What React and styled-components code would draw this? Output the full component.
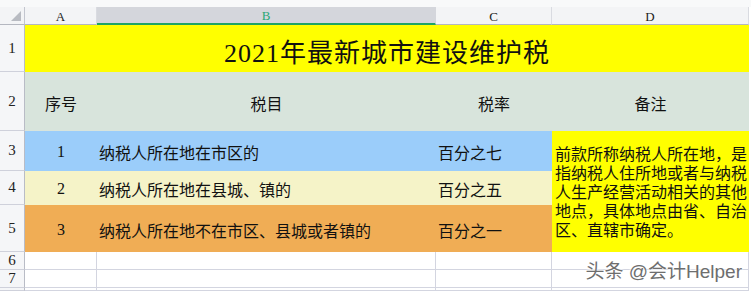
import React from "react"
import styled, {createGlobalStyle} from "styled-components"

const GlobalStyle = createGlobalStyle`
    html, body {
        margin: 0;
        padding: 0;
        background: #fff;
    }
    body {
        font-family: "Liberation Serif", "Noto Sans CJK SC", serif;
        color: #111;
    }
`

const Page = styled.div`
    position: relative;
    width: 751px;
    height: 291px;
    overflow: hidden;
    background: #fff;
`

const TopStrip = styled.div`
    height: 7px;
    background: #f8f9fa;
`

const Sheet = styled.div`
    display: grid;
    grid-template-columns: 25px 72px 339px 116px 197px;
    grid-template-rows: 18px 47px 59px 40px 34px 47px 18px 18px 3px;
    width: 749px;
`

const Corner = styled.div`
    box-sizing: border-box;
    display: flex;
    align-items: flex-end;
    justify-content: flex-end;
    padding: 0 3px 3px 0;
    background: #f3f4f6;
    border-right: 1px solid #c3c6cf;
    border-bottom: 1px solid #b4b7c0;
`

const ColHead = styled.div`
    box-sizing: border-box;
    display: flex;
    align-items: center;
    justify-content: center;
    font-size: 13px;
    padding-top: 2px;
    background: ${({$active}) => ($active ? "#d4d6dc" : "#f3f4f6")};
    color: ${({$active}) => ($active ? "#2aa876" : "#222")};
    border-right: 1px solid ${({$active}) => ($active ? "#d4d6dc" : "#d9dbe1")};
    border-bottom: ${({$active}) => ($active ? "2px solid #1fa463" : "1px solid #b4b7c0")};
    &:last-child {
        border-right-color: #a9acb5;
    }
`

const RowHead = styled.div`
    box-sizing: border-box;
    display: flex;
    align-items: center;
    justify-content: center;
    font-size: 15px;
    line-height: 1;
    overflow: hidden;
    background: #f5f6f8;
    color: #222;
    border-right: 1px solid #b9bcc6;
    border-bottom: 1px solid #cfd1db;
`

const Title = styled.div`
    grid-column: span 4;
    display: flex;
    align-items: center;
    justify-content: center;
    background: #ffff00;
    font-size: 26px;
    letter-spacing: 1px;
    color: #111;
    padding-top: 3px;
`

const Cell = styled.div`
    box-sizing: border-box;
    display: flex;
    align-items: center;
    justify-content: ${({$align}) => ($align === "left" ? "flex-start" : "center")};
    padding: 2px 2px 0 2px;
    font-size: 16px;
    white-space: nowrap;
    background: ${({$fill}) => $fill || "#fff"};
    border-right: ${({$fill}) => ($fill ? "none" : "1px solid #d3d5e0")};
    border-bottom: ${({$fill}) => ($fill ? "none" : "1px solid #d3d5e0")};
`

const NoteCell = styled.div`
    grid-row: span 3;
    display: flex;
    flex-direction: column;
    justify-content: center;
    padding: 2px 0 0 3px;
    background: #ffff00;
    font-size: 16px;
    line-height: 19px;
    color: #111;
`

const Watermark = styled.div`
    position: absolute;
    right: 9px;
    bottom: 10px;
    font-family: "Liberation Sans", "Noto Sans CJK SC", sans-serif;
    font-size: 19px;
    line-height: 1;
    color: #6e6e6e;
    text-shadow: 0 0 2px #fff, 0 0 2px #fff, 0 0 3px #fff;
`

const rows = [
    {name: "纳税人所在地在市区的", rate: "百分之七", fill: "#9bcdfa"},
    {name: "纳税人所在地在县城、镇的", rate: "百分之五", fill: "#f5f3c8"},
    {name: "纳税人所在地不在市区、县城或者镇的", rate: "百分之一", fill: "#f0ad55"},
]

const note = [
    "前款所称纳税人所在地，是",
    "指纳税人住所地或者与纳税",
    "人生产经营活动相关的其他",
    "地点，具体地点由省、自治",
    "区、直辖市确定。",
]

const App = () => {
    return (
        <Page>
            <GlobalStyle />
            <TopStrip />
            <Sheet>
                <Corner>
                    <svg width="10" height="10" viewBox="0 0 10 10">
                        <polygon points="10,0 10,10 0,10" fill="#b8bbc2" />
                    </svg>
                </Corner>
                <ColHead>A</ColHead>
                <ColHead $active>B</ColHead>
                <ColHead>C</ColHead>
                <ColHead>D</ColHead>

                <RowHead>1</RowHead>
                <Title>2021年最新城市建设维护税</Title>

                <RowHead>2</RowHead>
                <Cell $fill="#d8e4dc">序号</Cell>
                <Cell $fill="#d8e4dc">税目</Cell>
                <Cell $fill="#d8e4dc">税率</Cell>
                <Cell $fill="#d8e4dc">备注</Cell>

                {rows.map((row, i) => (
                    <React.Fragment key={i}>
                        <RowHead>{i + 3}</RowHead>
                        <Cell $fill={row.fill}>{i + 1}</Cell>
                        <Cell $fill={row.fill} $align="left">{row.name}</Cell>
                        <Cell $fill={row.fill} $align="left">{row.rate}</Cell>
                        {i === 0 && (
                            <NoteCell>
                                {note.map(line => (
                                    <span key={line}>{line}</span>
                                ))}
                            </NoteCell>
                        )}
                    </React.Fragment>
                ))}

                {[6, 7, 8].map(n => (
                    <React.Fragment key={n}>
                        <RowHead>{n < 8 ? n : ""}</RowHead>
                        <Cell />
                        <Cell />
                        <Cell />
                        <Cell />
                    </React.Fragment>
                ))}
            </Sheet>
            <Watermark>头条 @会计Helper</Watermark>
        </Page>
    )
}

export default App
